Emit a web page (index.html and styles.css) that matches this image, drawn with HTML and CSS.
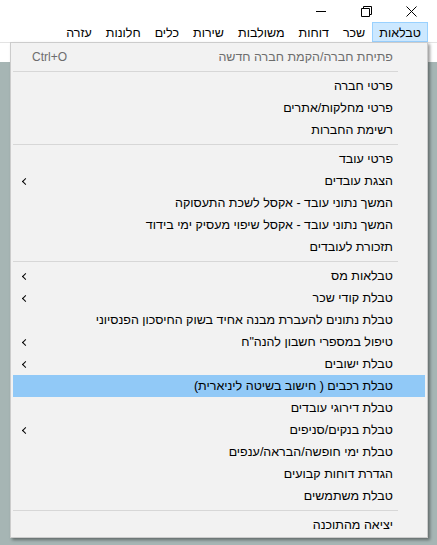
FILE: index.html
```html
<!doctype html>
<html lang="he">
<head>
<meta charset="utf-8">
<title>טבלאות</title>
<link rel="stylesheet" href="styles.css">
</head>
<body>
<div class="window">
	<!--שורת כותרת-->
	<div class="titlebar">
		<span class="ctl">
			<svg width="11" height="11" viewBox="0 0 11 11"><path d="M0 5.5H10" stroke="#000" stroke-width="1"/></svg>
		</span>
		<span class="ctl">
			<svg width="11" height="11" viewBox="0 0 11 11"><path d="M0.5 2.5H8.5V10.5H0.5Z M2.5 2.5V0.5H10.5V8.5H8.5" fill="none" stroke="#000" stroke-width="1"/></svg>
		</span>
		<span class="ctl">
			<svg width="11" height="11" viewBox="0 0 11 11"><path d="M0.5 0.5L10.5 10.5M10.5 0.5L0.5 10.5" stroke="#000" stroke-width="1"/></svg>
		</span>
	</div>
	<!--תפריט ראשי-->
	<div class="menubar" dir="rtl">
		<span class="mitem active">טבלאות</span>
		<span class="mitem">שכר</span>
		<span class="mitem">דוחות</span>
		<span class="mitem">משולבות</span>
		<span class="mitem">שירות</span>
		<span class="mitem">כלים</span>
		<span class="mitem">חלונות</span>
		<span class="mitem">עזרה</span>
	</div>
	<div class="toolbar"></div>
	<div class="client"></div>

	<!--תפריט נפתח-->
	<div class="popup" dir="rtl">
		<div class="item disabled"><span>פתיחת חברה/הקמת חברה חדשה</span><span class="key">Ctrl+O</span></div>
		<div class="sep"></div>
		<div class="item"><span>פרטי חברה</span></div>
		<div class="item"><span>פרטי מחלקות/אתרים</span></div>
		<div class="item"><span>רשימת החברות</span></div>
		<div class="sep"></div>
		<div class="item"><span>פרטי עובד</span></div>
		<div class="item sub"><span>הצגת עובדים</span></div>
		<div class="item"><span>המשך נתוני עובד - אקסל לשכת התעסוקה</span></div>
		<div class="item"><span>המשך נתוני עובד - אקסל שיפוי מעסיק ימי בידוד</span></div>
		<div class="item"><span>תזכורת לעובדים</span></div>
		<div class="sep"></div>
		<div class="item sub"><span>טבלאות מס</span></div>
		<div class="item sub"><span>טבלת קודי שכר</span></div>
		<div class="item"><span>טבלת נתונים להעברת מבנה אחיד בשוק החיסכון הפנסיוני</span></div>
		<div class="item sub"><span>טיפול במספרי חשבון להנה"ח</span></div>
		<div class="item sub"><span>טבלת ישובים</span></div>
		<div class="item hover"><span>טבלת רכבים ( חישוב בשיטה ליניארית)</span></div>
		<div class="item"><span>טבלת דירוגי עובדים</span></div>
		<div class="item sub"><span>טבלת בנקים/סניפים</span></div>
		<div class="item"><span>טבלת ימי חופשה/הבראה/ענפים</span></div>
		<div class="item"><span>הגדרת דוחות קבועים</span></div>
		<div class="item"><span>טבלת משתמשים</span></div>
		<div class="sep"></div>
		<div class="item"><span>יציאה מהתוכנה</span></div>
	</div>
</div>
</body>
</html>
```

FILE: styles.css
```css
body
{
	margin: 0;
	font-family: "Liberation Sans", "DejaVu Sans", sans-serif;
	font-size: 12.5px;
	color: #000;
	background: #a6b5b4;
}
.window
{
	position: relative;
	width: 437px;
	height: 545px;
	overflow: hidden;
}
/*שורת כותרת*/
.titlebar
{
	height: 22px;
	background: #fff;
	display: flex;
	justify-content: flex-end;
	align-items: center;
	padding-right: 20px;
	gap: 34px;
}
.ctl
{
	display: flex;
	width: 11px;
	height: 11px;
}
/*תפריט ראשי*/
.menubar
{
	height: 20px;
	background: #fff;
	display: flex;
	align-items: stretch;
	padding-right: 9px;
	border-bottom: 1px solid #e3e3e3;
}
.mitem
{
	display: flex;
	align-items: center;
	padding: 1px 6px 0 6px;
	border: 1px solid transparent;
}
.mitem.active
{
	background: #cce8ff;
	border-color: #99d1ff;
}
.toolbar
{
	height: 19px;
	background: #fff;
}
.client
{
	height: 483px;
	background: #a6b5b4;
}
/*תפריט נפתח*/
.popup
{
	position: absolute;
	left: 10px;
	top: 42px;
	width: 412px;
	background: #f2f2f2;
	border: 1px solid #cccccc;
	padding: 3px 2px 1px 2px;
	box-shadow: 2px 2px 3px rgba(0,0,0,0.4);
}
.item
{
	height: 22px;
	display: flex;
	align-items: center;
	padding-right: 32px;
	white-space: nowrap;
}
.item.disabled
{
	color: #6d6d6d;
}
.item.hover
{
	background: #91c9f7;
}
.key
{
	margin-right: auto;
	margin-left: 19px;
	font-size: 12px;
}
.item.sub::after
{
	content: "";
	margin-right: auto;
	margin-left: 10px;
	width: 4px;
	height: 4px;
	border-left: 1px solid #000;
	border-bottom: 1px solid #000;
	transform: rotate(45deg);
}
.sep
{
	height: 1px;
	background: #d7d7d7;
	margin: 3px 27px 3px 0;
}
```
